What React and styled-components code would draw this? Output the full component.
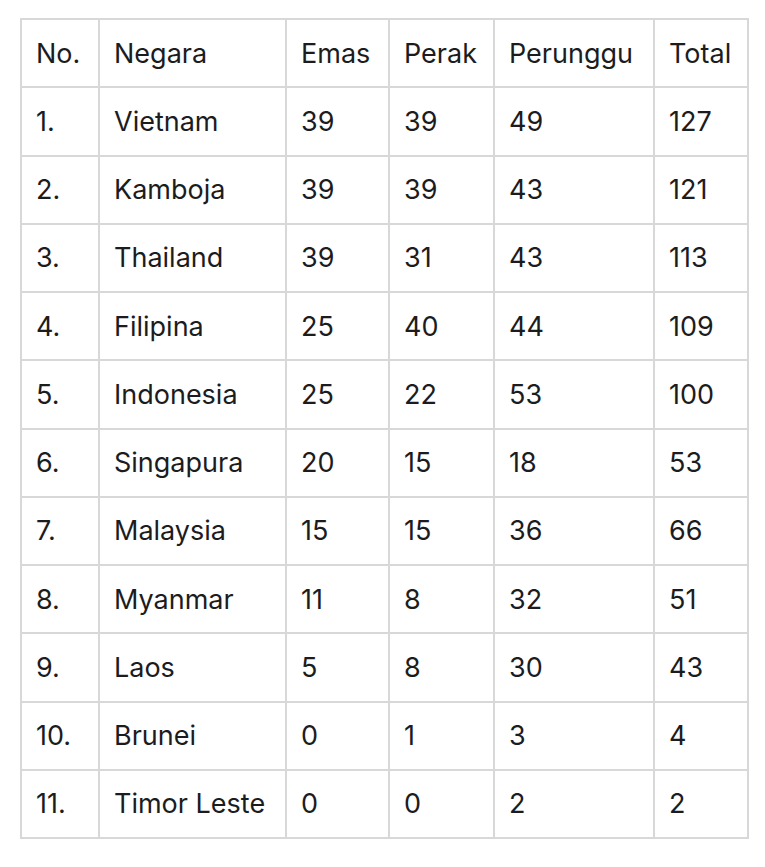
import React from 'react';
import styled, { createGlobalStyle } from 'styled-components';

const medals = [
  ['1.', 'Vietnam', 39, 39, 49, 127],
  ['2.', 'Kamboja', 39, 39, 43, 121],
  ['3.', 'Thailand', 39, 31, 43, 113],
  ['4.', 'Filipina', 25, 40, 44, 109],
  ['5.', 'Indonesia', 25, 22, 53, 100],
  ['6.', 'Singapura', 20, 15, 18, 53],
  ['7.', 'Malaysia', 15, 15, 36, 66],
  ['8.', 'Myanmar', 11, 8, 32, 51],
  ['9.', 'Laos', 5, 8, 30, 43],
  ['10.', 'Brunei', 0, 1, 3, 4],
  ['11.', 'Timor Leste', 0, 0, 2, 2],
];

const headers = ['No.', 'Negara', 'Emas', 'Perak', 'Perunggu', 'Total'];
const widths = [78, 187, 103, 105, 160, 94];

function App() {
  return (
    <>
      <GlobalStyle />
      <Page>
        <Table>
          <colgroup>
            {widths.map((w, i) => (
              <col key={i} style={{ width: w }} />
            ))}
          </colgroup>
          <thead>
            <Row>
              {headers.map((h) => (
                <Cell as="th" key={h}>
                  {h}
                </Cell>
              ))}
            </Row>
          </thead>
          <tbody>
            {medals.map((row) => (
              <Row key={row[0]}>
                {row.map((val, i) => (
                  <Cell key={i}>{val}</Cell>
                ))}
              </Row>
            ))}
          </tbody>
        </Table>
      </Page>
    </>
  );
}

const GlobalStyle = createGlobalStyle`
  body {
    margin: 0;
    background: #ffffff;
    font-family: Inter, "Noto Sans", sans-serif;
  }
`;

const Page = styled.div`
  padding: 18px 0 0 20px;
`;

const Table = styled.table`
  border-collapse: collapse;
  table-layout: fixed;
  width: 727px;
  color: #1c1c1e;
`;

const Row = styled.tr`
  height: 68.25px;
`;

const Cell = styled.td`
  border: 2px solid #d8d8d8;
  padding: 0 0 0 14px;
  font-size: 27px;
  font-weight: 400;
  text-align: left;
  vertical-align: middle;
  white-space: nowrap;
`;

export default App;
